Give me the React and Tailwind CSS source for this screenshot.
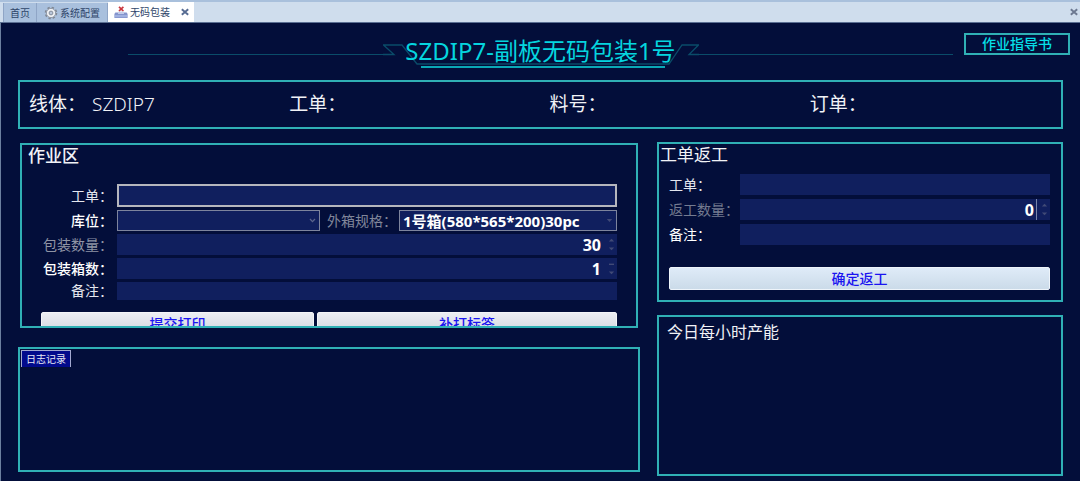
import React, { useState } from 'react';

const CloseIcon = ({ className }) => (
  <svg width="8" height="8" viewBox="0 0 8 8" className={className} fill="none" stroke="currentColor" strokeWidth="1.9">
    <path d="M0.8 1.2 L7.2 6.8 M7.2 1.2 L0.8 6.8" />
  </svg>
);

const GearIcon = () => (
  <svg width="14" height="14" viewBox="0 0 14 14">
    <circle cx="7" cy="7" r="5.4" fill="none" stroke="#7f8794" strokeWidth="1.8" strokeDasharray="2.3 1.94" />
    <circle cx="7" cy="7" r="4.6" fill="#eef0f3" stroke="#8d95a2" strokeWidth="0.9" />
    <circle cx="7" cy="7" r="1.9" fill="#b9c6da" stroke="#7f8794" strokeWidth="0.9" />
  </svg>
);

const PackIcon = () => (
  <svg width="14" height="13" viewBox="0 0 14 13">
    <path d="M4 6.5 L5 4.5 H9.4 L10.4 6.5 Z" fill="#e3e8f4" />
    <path d="M5 0.8 L9.4 5 M9.4 0.8 L5 5" stroke="#c9363d" strokeWidth="1.7" fill="none" />
    <path d="M1.4 6.4 H12.6 L13.6 8 V12 H0.4 V8 Z" fill="#8494cd" />
    <path d="M4 6 H10 V8 H4 Z" fill="#c3cdea" />
    <path d="M1 9 H13 V11.2 H1 Z" fill="#9fb0e0" />
  </svg>
);

const Spinner = ({ onUp, onDown, dash }) => (
  <span className="flex w-3 flex-col items-center justify-between py-1 text-[#414a76]">
    <button type="button" aria-label="+" onClick={onUp} className="block">
      <svg width="7" height="4" viewBox="0 0 7 4" fill="currentColor" className="block">
        {dash ? <path d="M1 1.6 H6 V3 H1 Z" /> : <path d="M0.8 3.6 L3.5 0.8 L6.2 3.6 Z" />}
      </svg>
    </button>
    <button type="button" aria-label="-" onClick={onDown} className="block">
      <svg width="7" height="4" viewBox="0 0 7 4" fill="currentColor" className="block">
        <path d="M0.8 0.4 L3.5 3.2 L6.2 0.4 Z" />
      </svg>
    </button>
  </span>
);

const NumberField = ({ id, initial, dash, caret }) => {
  const [value, setValue] = useState(initial);
  return (
    <div className="flex h-[21px] min-w-0 flex-1 bg-[#101f5e]">
      <input
        id={id}
        type="text"
        inputMode="numeric"
        value={value}
        onChange={(e) => setValue(Number(e.target.value) || 0)}
        className={`min-w-0 flex-1 bg-transparent text-right text-[16px] leading-5 font-bold text-white outline-none ${
          caret ? 'mr-px border-r border-[#7884aa] pr-0.5' : 'pr-1'
        }`}
      />
      <Spinner dash={dash} onUp={() => setValue(value + 1)} onDown={() => setValue(Math.max(0, value - 1))} />
    </div>
  );
};

const SelectBox = ({ id, options, solid }) => (
  <div className="relative min-w-0">
    <select
      id={id}
      className="block h-[21px] w-full appearance-none border border-[#7d849d] bg-[#101f5e] pl-[3px] text-[15px] leading-[18px] font-bold text-white outline-none"
    >
      {options.map((o) => (
        <option key={o}>{o}</option>
      ))}
    </select>
    <svg width="7" height="5" viewBox="0 0 7 5" className="pointer-events-none absolute top-2 right-1">
      {solid ? (
        <path d="M0.8 1 H6.2 L3.5 4 Z" fill="#414a76" />
      ) : (
        <path d="M1 1 L3.5 3.6 L6 1" fill="none" stroke="#5b648c" strokeWidth="1.3" />
      )}
    </svg>
  </div>
);

const Row = ({ id, label, tone, children }) => (
  <div className="flex items-center">
    <label htmlFor={id} className={`w-[76px] shrink-0 pr-1 text-right text-[14px] leading-[18px] whitespace-nowrap ${tone}`}>
      {label}
    </label>
    {children}
  </div>
);

const ReworkRow = ({ id, label, tone, children }) => (
  <div className="flex items-center">
    <label htmlFor={id} className={`w-[71px] shrink-0 text-[14px] leading-[18px] whitespace-nowrap ${tone}`}>
      {label}
    </label>
    {children}
  </div>
);

const infoItems = [
  { label: '线体：', value: 'SZDIP7' },
  { label: '工单：', value: '' },
  { label: '料号：', value: '' },
  { label: '订单：', value: '' },
];

const App = () => {
  return (
    <div
      lang="zh-CN"
      className="flex min-h-screen flex-col bg-[#030e3a] font-['Noto_Sans','Noto_Sans_CJK_SC',sans-serif] text-[#f1f2f6]"
    >
      {/* Tab strip */}
      <nav className="flex h-[23px] items-stretch border-t-2 border-b border-t-[#a9c0dc] border-b-[#5b6f93] bg-[#cfdded] pl-[3px] text-[10px] leading-4 text-[#2e4569]">
        <a href="#home" className="mt-px flex items-center border-x border-[#8fa5c6] bg-[#a9c0dd] px-[6px]">
          首页
        </a>
        <a href="#config" className="mt-px flex items-center gap-[2px] border-r border-[#8fa5c6] bg-[#a9c0dd] pr-[7px] pl-[7px]">
          <GearIcon />
          系统配置
        </a>
        <div className="flex items-center bg-white pr-[5px] pl-[6px]">
          <a href="#pack" className="flex items-center gap-[2px]">
            <PackIcon />
            无码包装
          </a>
          <button type="button" aria-label="关闭" className="ml-[11px] text-[#566b92]">
            <CloseIcon />
          </button>
        </div>
        <button type="button" aria-label="关闭" className="mr-[2px] ml-auto text-[#6c7890]">
          <CloseIcon />
        </button>
      </nav>

      <div className="flex flex-1 flex-col border-l border-[#6c7f9f]">
        {/* Title with its side lines */}
        <header className="flex h-[57px] items-start gap-[11px] pt-[10px] pr-[10px] pl-[127px]">
          <div className="flex flex-1">
            <div className="mt-[21px] h-px flex-1 bg-[#0a4c69]" />
            <div className="relative h-[38px] w-[316px]">
              <svg viewBox="0 0 316 38" className="absolute inset-0 h-full w-full" fill="none">
                <path
                  d="M0 21.5 H11 L0.5 12 H19 L34 31 H286 L299 12 H315.5 L306 21.5 H316"
                  stroke="#0a4c69"
                  strokeWidth="1.3"
                />
                <path d="M38 34 H282" stroke="#0ba8b6" strokeWidth="2" />
              </svg>
              <h1 className="relative text-center text-[24px] leading-[36px] whitespace-nowrap text-[#05d5df]">
                SZDIP7-副板无码包装1号
              </h1>
            </div>
            <div className="mt-[21px] h-px flex-1 bg-[#0a4c69]" />
          </div>
          <button
            type="button"
            className="h-[22px] w-[106px] border-2 border-[#30b0b5] text-[14px] leading-[18px] font-medium text-[#06dfe6]"
          >
            作业指导书
          </button>
        </header>

        {/* Order summary */}
        <section className="mr-[17px] ml-[17px] grid h-[49px] grid-cols-4 items-center border-2 border-[#30b0b5] pb-px text-[19px] leading-6">
          {infoItems.map((item) => (
            <div key={item.label} className="flex gap-[6px] pl-[9px]">
              <span>{item.label}</span>
              <span className="font-light">{item.value}</span>
            </div>
          ))}
        </section>

        <main className="grid flex-1 grid-cols-[622fr_406fr] gap-[17px] px-[17px] pt-[13px] pb-[5px]">
          <div className="flex min-w-0 flex-col pt-px pb-1">
            {/* Work area, the buttons run under its lower edge */}
            <section className="mx-[2px] h-[185px] overflow-hidden border-2 border-[#30b0b5]">
              <h2 className="pl-[6px] text-[17px] leading-[22px] font-medium">作业区</h2>
              <form className="mt-[17px] px-[19px]" onSubmit={(e) => e.preventDefault()}>
                <div className="flex flex-col gap-[3px]">
                  <Row id="order" label="工单：" tone="text-[#e4e6ee]">
                    <input id="order" type="text" className="h-[23px] min-w-0 flex-1 border-2 border-[#b5b6bd] bg-[#101f5e] px-1 text-[14px] outline-none" />
                  </Row>
                  <Row id="store" label="库位：" tone="font-medium text-white">
                    <div className="grid min-w-0 flex-1 grid-cols-[203fr_79px_218fr] items-center">
                      <SelectBox id="store" options={['']} />
                      <label htmlFor="box" className="pl-[7px] text-[14px] leading-[18px] whitespace-nowrap text-[#80869a]">
                        外箱规格：
                      </label>
                      <SelectBox id="box" options={['1号箱(580*565*200)30pc']} solid />
                    </div>
                  </Row>
                  <Row id="qty" label="包装数量：" tone="text-[#8f94a5]">
                    <NumberField id="qty" initial={30} />
                  </Row>
                  <Row id="boxes" label="包装箱数：" tone="font-medium text-white">
                    <NumberField id="boxes" initial={1} dash />
                  </Row>
                  <Row id="note" label="备注：" tone="text-[#e4e6ee]">
                    <input id="note" type="text" className="h-[18px] min-w-0 flex-1 bg-[#101f5e] px-1 text-[14px] outline-none" />
                  </Row>
                </div>
                <div className="mt-3 grid grid-cols-[273fr_300fr] gap-[3px] text-[14px] leading-[18px] font-medium text-[#1a14f0]">
                  <button type="submit" className="h-6 rounded-[2px] border border-[#f4f5f8] bg-linear-to-b from-[#eceef3] to-[#d0d4dc]">
                    提交打印
                  </button>
                  <button type="button" className="h-6 rounded-[2px] border border-[#f4f5f8] bg-linear-to-b from-[#eceef3] to-[#d0d4dc]">
                    补打标签
                  </button>
                </div>
              </form>
            </section>

            {/* Log */}
            <section className="mt-[19px] flex-1 border-2 border-[#30b0b5] pt-px pl-px">
              <button
                type="button"
                className="block h-[17px] border border-b-0 border-[#a3a9d0] bg-[#020a8c] px-[4px] text-[10px] leading-4 text-[#e6e8f5]"
              >
                日志记录
              </button>
            </section>
          </div>

          <div className="flex min-w-0 flex-col gap-[13px]">
            {/* Rework */}
            <section className="h-[160px] border-2 border-[#30b0b5]">
              <h2 className="pl-px text-[17px] leading-[22px]">工单返工</h2>
              <form className="mt-2 pr-[11px] pl-[10px]" onSubmit={(e) => e.preventDefault()}>
                <div className="flex flex-col gap-1">
                  <ReworkRow id="rework-order" label="工单：" tone="text-[#e4e6ee]">
                    <input id="rework-order" type="text" className="h-[21px] min-w-0 flex-1 bg-[#101f5e] px-1 text-[14px] outline-none" />
                  </ReworkRow>
                  <ReworkRow id="rework-qty" label="返工数量：" tone="text-[#747b90]">
                    <NumberField id="rework-qty" initial={0} caret />
                  </ReworkRow>
                  <ReworkRow id="rework-note" label="备注：" tone="text-white">
                    <input id="rework-note" type="text" className="h-[21px] min-w-0 flex-1 bg-[#101f5e] px-1 text-[14px] outline-none" />
                  </ReworkRow>
                </div>
                <button
                  type="submit"
                  className="mt-[22px] h-[23px] w-full rounded-[2px] border border-[#eef4fa] bg-linear-to-b from-[#dfebf8] to-[#cbdbe9] text-[14px] leading-5 font-medium text-[#1a14f0]"
                >
                  确定返工
                </button>
              </form>
            </section>

            {/* Hourly output */}
            <section className="flex-1 border-2 border-[#30b0b5] pt-1 pl-2">
              <h2 className="text-[16px] leading-[22px]">今日每小时产能</h2>
            </section>
          </div>
        </main>
      </div>
    </div>
  );
};

export default App;
